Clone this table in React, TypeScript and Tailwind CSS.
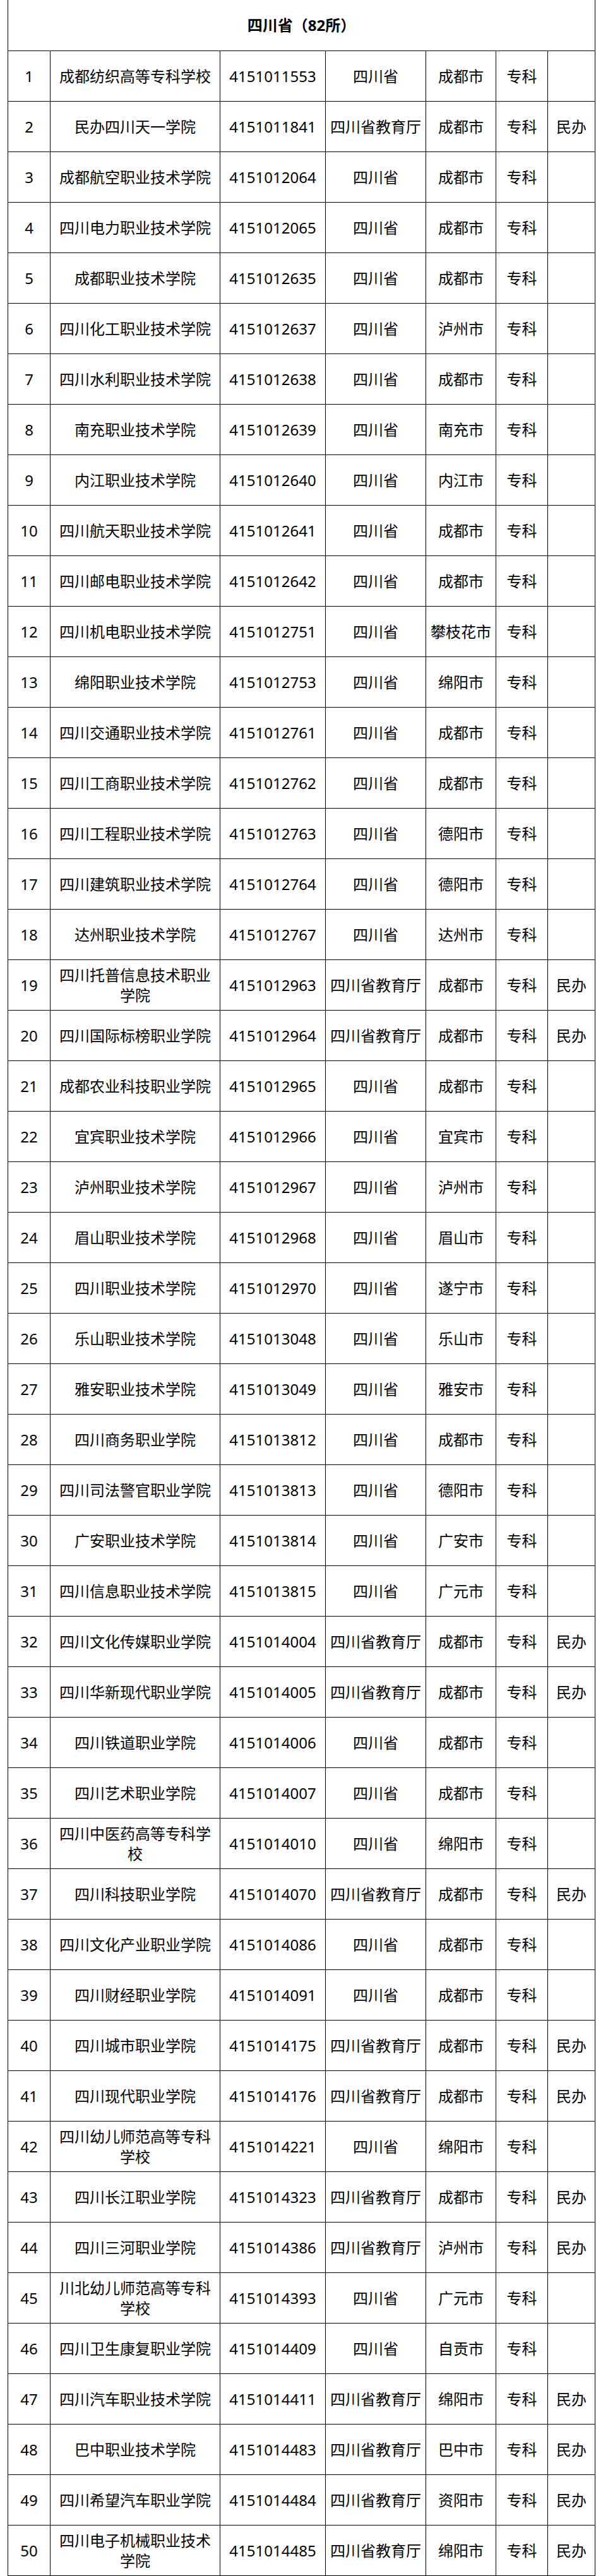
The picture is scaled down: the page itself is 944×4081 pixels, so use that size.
const rows: [string, string, string, string, string][] = [
  ["成都纺织高等专科学校", "4151011553", "四川省", "成都市", ""],
  ["民办四川天一学院", "4151011841", "四川省教育厅", "成都市", "民办"],
  ["成都航空职业技术学院", "4151012064", "四川省", "成都市", ""],
  ["四川电力职业技术学院", "4151012065", "四川省", "成都市", ""],
  ["成都职业技术学院", "4151012635", "四川省", "成都市", ""],
  ["四川化工职业技术学院", "4151012637", "四川省", "泸州市", ""],
  ["四川水利职业技术学院", "4151012638", "四川省", "成都市", ""],
  ["南充职业技术学院", "4151012639", "四川省", "南充市", ""],
  ["内江职业技术学院", "4151012640", "四川省", "内江市", ""],
  ["四川航天职业技术学院", "4151012641", "四川省", "成都市", ""],
  ["四川邮电职业技术学院", "4151012642", "四川省", "成都市", ""],
  ["四川机电职业技术学院", "4151012751", "四川省", "攀枝花市", ""],
  ["绵阳职业技术学院", "4151012753", "四川省", "绵阳市", ""],
  ["四川交通职业技术学院", "4151012761", "四川省", "成都市", ""],
  ["四川工商职业技术学院", "4151012762", "四川省", "成都市", ""],
  ["四川工程职业技术学院", "4151012763", "四川省", "德阳市", ""],
  ["四川建筑职业技术学院", "4151012764", "四川省", "德阳市", ""],
  ["达州职业技术学院", "4151012767", "四川省", "达州市", ""],
  ["四川托普信息技术职业学院", "4151012963", "四川省教育厅", "成都市", "民办"],
  ["四川国际标榜职业学院", "4151012964", "四川省教育厅", "成都市", "民办"],
  ["成都农业科技职业学院", "4151012965", "四川省", "成都市", ""],
  ["宜宾职业技术学院", "4151012966", "四川省", "宜宾市", ""],
  ["泸州职业技术学院", "4151012967", "四川省", "泸州市", ""],
  ["眉山职业技术学院", "4151012968", "四川省", "眉山市", ""],
  ["四川职业技术学院", "4151012970", "四川省", "遂宁市", ""],
  ["乐山职业技术学院", "4151013048", "四川省", "乐山市", ""],
  ["雅安职业技术学院", "4151013049", "四川省", "雅安市", ""],
  ["四川商务职业学院", "4151013812", "四川省", "成都市", ""],
  ["四川司法警官职业学院", "4151013813", "四川省", "德阳市", ""],
  ["广安职业技术学院", "4151013814", "四川省", "广安市", ""],
  ["四川信息职业技术学院", "4151013815", "四川省", "广元市", ""],
  ["四川文化传媒职业学院", "4151014004", "四川省教育厅", "成都市", "民办"],
  ["四川华新现代职业学院", "4151014005", "四川省教育厅", "成都市", "民办"],
  ["四川铁道职业学院", "4151014006", "四川省", "成都市", ""],
  ["四川艺术职业学院", "4151014007", "四川省", "成都市", ""],
  ["四川中医药高等专科学校", "4151014010", "四川省", "绵阳市", ""],
  ["四川科技职业学院", "4151014070", "四川省教育厅", "成都市", "民办"],
  ["四川文化产业职业学院", "4151014086", "四川省", "成都市", ""],
  ["四川财经职业学院", "4151014091", "四川省", "成都市", ""],
  ["四川城市职业学院", "4151014175", "四川省教育厅", "成都市", "民办"],
  ["四川现代职业学院", "4151014176", "四川省教育厅", "成都市", "民办"],
  ["四川幼儿师范高等专科学校", "4151014221", "四川省", "绵阳市", ""],
  ["四川长江职业学院", "4151014323", "四川省教育厅", "成都市", "民办"],
  ["四川三河职业学院", "4151014386", "四川省教育厅", "泸州市", "民办"],
  ["川北幼儿师范高等专科学校", "4151014393", "四川省", "广元市", ""],
  ["四川卫生康复职业学院", "4151014409", "四川省", "自贡市", ""],
  ["四川汽车职业技术学院", "4151014411", "四川省教育厅", "绵阳市", "民办"],
  ["巴中职业技术学院", "4151014483", "四川省教育厅", "巴中市", "民办"],
  ["四川希望汽车职业学院", "4151014484", "四川省教育厅", "资阳市", "民办"],
  ["四川电子机械职业技术学院", "4151014485", "四川省教育厅", "绵阳市", "民办"],
];

const cell = "bg-white flex items-center justify-center text-center h-[79px] px-1 leading-[32px]";

export default function App() {
  return (
    <main
      className="min-h-screen bg-white text-black text-[24px] pl-[12px]"
      style={{ fontFamily: '"Noto Sans", "Noto Sans CJK SC", sans-serif' }}
    >
      <div className="w-[931px] bg-black px-px pb-px grid grid-cols-[66px_268px_166px_158px_110px_81px_74px] gap-px">
        {/* Header */}
        <div className="col-span-7 bg-white h-[80px] flex items-center justify-center font-bold">
          四川省（82所）
        </div>

        {rows.map(([name, code, dept, city, kind], i) => (
          <div key={code} className="contents">
            <div className={cell}>{i + 1}</div>
            <div className={cell}>{name}</div>
            <div className={cell}>{code}</div>
            <div className={cell}>{dept}</div>
            <div className={cell}>{city}</div>
            <div className={cell}>专科</div>
            <div className={cell}>{kind}</div>
          </div>
        ))}
      </div>
    </main>
  );
}
